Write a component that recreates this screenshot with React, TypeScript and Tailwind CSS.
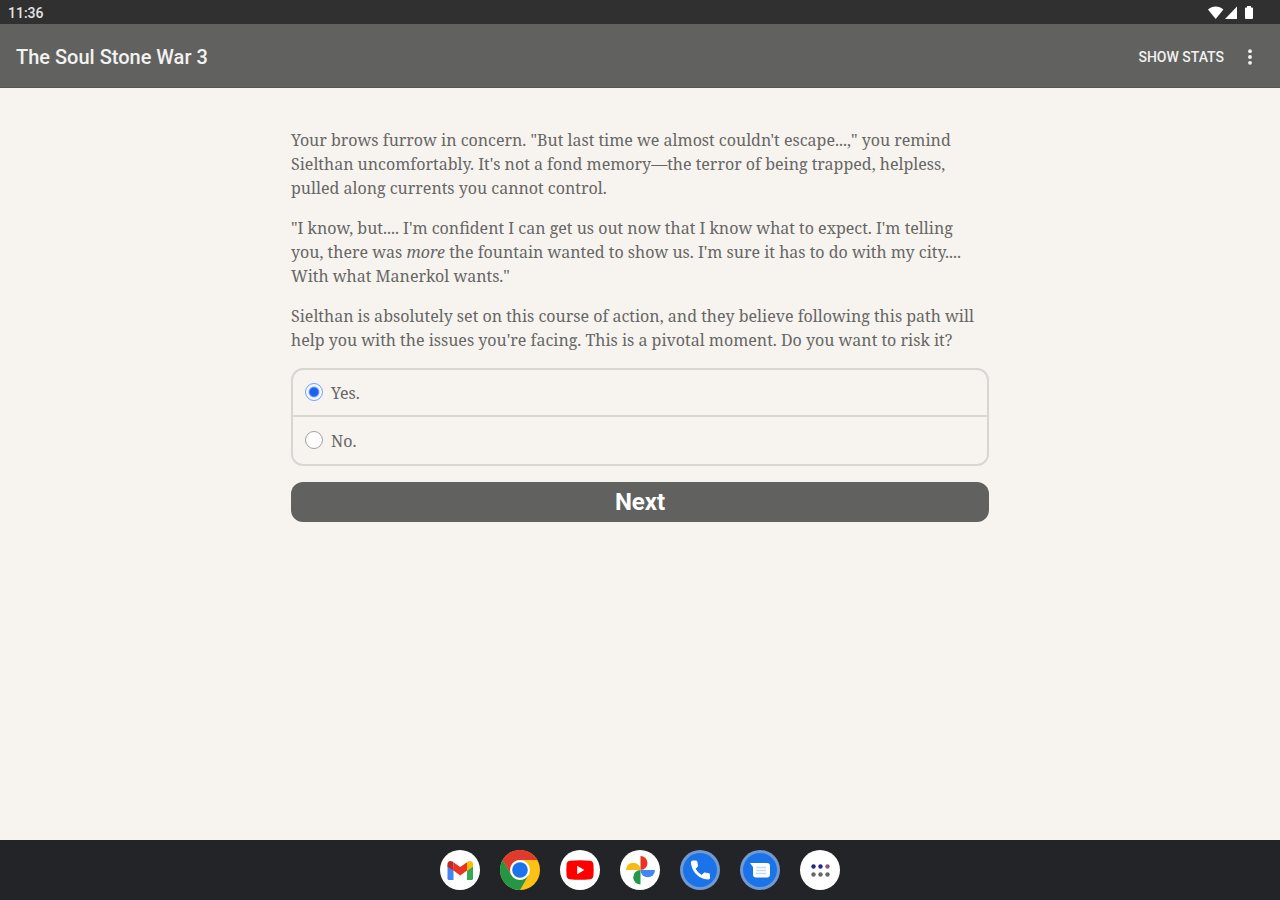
import { useState } from "react";
import type { ReactNode } from "react";

function StatusBar() {
  return (
    <div className="flex h-6 items-center justify-between bg-[#303030] pl-2 pr-6 text-white">
      <time className="pt-0.5 text-sm font-medium leading-5 text-[#e4e4e4]">11:36</time>
      <svg className="h-4 w-12" viewBox="0 0 48 16" fill="currentColor" aria-label="Wi-Fi, signal and battery">
        <path d="M0 5.500C4.400 1.500 11 1.500 15.400 5.500L7.700 15Z" />
        <path d="M29 2.500V15H17Z" />
        <path d="M38 3.500h1V2h4v1.500h1q1 0 1 1V14q0 1-1 1H38q-1 0-1-1V4.500q0-1 1-1Z" />
      </svg>
    </div>
  );
}

function AppBar() {
  return (
    <header className="flex h-16 items-center justify-between border-b border-[#555553] bg-[#61615f] pl-4 pr-5 pt-0.5 text-[#f2f2f1]">
      <h1 className="text-xl font-medium leading-6">The Soul Stone War 3</h1>
      <div className="flex items-center gap-4">
        <button type="button" className="text-sm font-medium uppercase leading-5">Show stats</button>
        <button type="button" aria-label="More options" className="flex h-6 w-5 items-center justify-center">
          <svg className="h-6 w-6" viewBox="0 0 24 24" fill="currentColor">
            <circle cx="12" cy="5" r="2.300" />
            <circle cx="12" cy="12" r="2.300" />
            <circle cx="12" cy="19" r="2.300" />
          </svg>
        </button>
      </div>
    </header>
  );
}

function Story() {
  return (
    <div className="flex flex-col gap-4">
      <p>
        Your brows furrow in concern. "But last time we almost couldn't escape...," you remind
        <br />
        Sielthan uncomfortably. It's not a fond memory—the terror of being trapped, helpless,
        <br />
        pulled along currents you cannot control.
      </p>
      <p>
        "I know, but.... I'm confident I can get us out now that I know what to expect. I'm telling
        <br />
        you, there was <em>more</em> the fountain wanted to show us. I'm sure it has to do with my city....
        <br />
        With what Manerkol wants."
      </p>
      <p>
        Sielthan is absolutely set on this course of action, and they believe following this path will
        <br />
        help you with the issues you're facing. This is a pivotal moment. Do you want to risk it?
      </p>
    </div>
  );
}

const choices = ["Yes.", "No."];

function Choices() {
  const [picked, setPicked] = useState(0);
  return (
    <form onSubmit={(e) => e.preventDefault()}>
      <div className="mt-4 divide-y-2 divide-[#d8d6d3] rounded-xl border-2 border-[#d8d6d3]">
        {choices.map((choice, i) => (
          <label key={choice} className="flex h-[47px] items-center gap-2 px-3">
            <input
              type="radio"
              name="choice"
              checked={picked === i}
              onChange={() => setPicked(i)}
              className="mb-0.5 size-[18px] appearance-none rounded-full border border-[#a0a0a0] bg-white checked:border-[#6f9ff5] checked:bg-[radial-gradient(circle,#1a64f0_4px,#f7f9ff_6px)]"
            />
            <span>{choice}</span>
          </label>
        ))}
      </div>
      <button
        type="submit"
        className="mt-4 block h-10 w-full rounded-xl bg-[#61615f] text-center font-['Roboto',sans-serif] text-2xl font-bold leading-10 text-white"
      >
        Next
      </button>
    </form>
  );
}

function DockIcon({ label, children }: { label: string; children: ReactNode }) {
  return (
    <a href="#" aria-label={label} className="block size-10">
      <svg className="size-10" viewBox="0 0 40 40">
        {children}
      </svg>
    </a>
  );
}

function Dock() {
  return (
    <nav aria-label="Apps" className="flex h-[60px] items-center justify-center gap-5 bg-[#232427]">
      <DockIcon label="Gmail">
        <circle cx="20" cy="20" r="20" fill="#fff" />
        <path d="M7.500 15V28.500q0 1.500 1.500 1.500H13.500V17Z" fill="#4285f4" />
        <path d="M33 15V28.500q0 1.500-1.500 1.500H27V17Z" fill="#34a853" />
        <path d="M27 12.200V21L33 16.800V14C33 11 30 10.200 28 11.500Z" fill="#fbbc04" />
        <path d="M13.500 20.500V12.200L20.250 17L27 12.200V20.500L20.250 25.500Z" fill="#ea3323" />
        <path d="M7.500 14C7.500 11 10.500 10.200 12.500 11.500L13.500 12.200V20.500L7.500 16.800Z" fill="#c9251f" />
      </DockIcon>
      <DockIcon label="Chrome">
        <circle cx="20" cy="20" r="20" fill="#fbc116" />
        <path d="M2.680 10A20 20 0 0 1 37.320 10H20A10 10 0 0 0 11.340 25Z" fill="#df3a2d" />
        <path d="M2.680 10A20 20 0 0 0 20 40L28.660 25A10 10 0 0 1 11.340 25Z" fill="#249646" />
        <circle cx="20" cy="20" r="10" fill="#fff" />
        <circle cx="20" cy="20" r="7.800" fill="#1a73e8" />
      </DockIcon>
      <DockIcon label="YouTube">
        <circle cx="20" cy="20" r="20" fill="#fff" />
        <path d="M10 10.800Q20 9.800 30 10.800Q33 11.100 33.400 14Q34 20 33.400 26Q33 28.900 30 29.200Q20 30.200 10 29.200Q7 28.900 6.600 26Q6 20 6.600 14Q7 11.100 10 10.800Z" fill="#f00" />
        <path d="M17.200 15.800L24.400 20L17.200 24.200Z" fill="#fff" />
      </DockIcon>
      <DockIcon label="Photos">
        <circle cx="20" cy="20" r="20" fill="#fff" />
        <path d="M20.500 20V6A7 7 0 0 1 20.500 20Z" fill="#ea3323" />
        <path d="M20.500 20H35A7.250 7.250 0 0 1 20.500 20Z" fill="#4285f4" />
        <path d="M20.500 20V34.500A7.250 7.250 0 0 1 20.500 20Z" fill="#23984a" />
        <path d="M20.500 20H6A7.250 7.250 0 0 1 20.500 20Z" fill="#f7b916" />
      </DockIcon>
      <DockIcon label="Phone">
        <circle cx="20" cy="20" r="20" fill="#7399d1" />
        <circle cx="20" cy="20" r="17" fill="#1a73e8" />
        <path
          transform="translate(8.500 8)"
          d="M6.620 10.790a15.150 15.150 0 0 0 6.590 6.590l2.200-2.200a1 1 0 0 1 1.020-.240c1.120.370 2.330.570 3.570.570a1 1 0 0 1 1 1V20a1 1 0 0 1-1 1C10.610 21 3 13.390 3 4a1 1 0 0 1 1-1h3.500a1 1 0 0 1 1 1c0 1.250.200 2.450.570 3.570a1 1 0 0 1-.250 1.020z"
          fill="#fff"
          stroke="#fff"
          strokeLinejoin="round"
        />
      </DockIcon>
      <DockIcon label="Messages">
        <circle cx="20" cy="20" r="20" fill="#7399d1" />
        <circle cx="20" cy="20" r="17" fill="#1a73e8" />
        <path d="M10 13H27Q30 13 30 16V24.500Q30 27.500 27 27.500H16Q13 27.500 13 24.500V17Z" fill="#fff" />
        <path d="M16 17.500H26M16 20.500H26M16 23.500H26" stroke="#c5dafa" strokeWidth="1.500" />
      </DockIcon>
      <DockIcon label="All apps">
        <circle cx="20" cy="20" r="20" fill="#fff" />
        <g fill="#27277f">
          <circle cx="13.500" cy="16.500" r="2.200" />
          <circle cx="20.500" cy="16.500" r="2.200" />
        </g>
        <circle cx="27.500" cy="16.500" r="2.200" fill="#855a78" />
        <g fill="#66666e">
          <circle cx="13.500" cy="24.500" r="2.200" />
          <circle cx="20.500" cy="24.500" r="2.200" />
          <circle cx="27.500" cy="24.500" r="2.200" />
        </g>
      </DockIcon>
    </nav>
  );
}

export default function App() {
  return (
    <div className="flex min-h-screen flex-col bg-[#f7f4f0] font-['Roboto',sans-serif]">
      <StatusBar />
      <AppBar />
      <main className="mx-auto w-full max-w-[698px] grow pt-10 font-['Noto_Serif','DejaVu_Serif_Condensed','DejaVu_Serif',serif] text-base leading-6 text-[#666664]">
        <Story />
        <Choices />
      </main>
      <Dock />
    </div>
  );
}
